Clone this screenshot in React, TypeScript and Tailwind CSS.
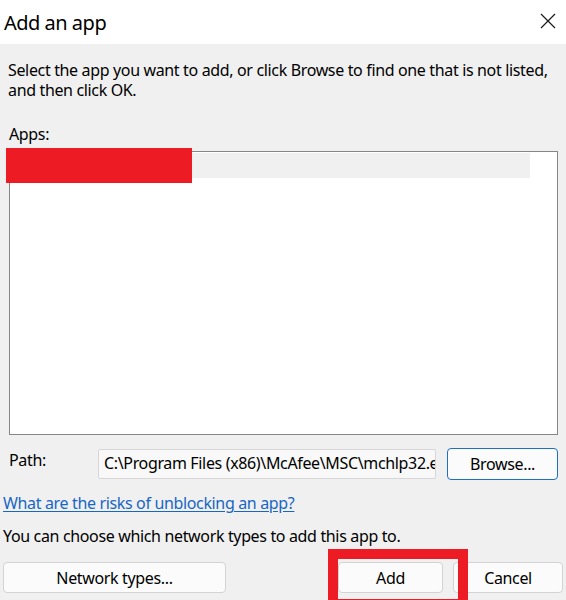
const font = { fontFamily: '"Noto Sans", "Open Sans", sans-serif' };

const CloseIcon = () => (
  <svg width="16" height="16" viewBox="0 0 16 16" fill="none">
    <path d="M1 1L15 15M15 1L1 15" stroke="#1a1a1a" strokeWidth="1.2" />
  </svg>
);

const Button = ({ label, className = "" }: { label: string; className?: string }) => (
  <button
    className={
      "h-[31px] rounded-[4px] border border-[#d3d3d3] bg-[#fbfbfb] text-[16px] tracking-[-0.35px] text-black " +
      className
    }
  >
    {label}
  </button>
);

export default function App() {
  return (
    <div className="w-[566px] h-[600px] overflow-hidden flex flex-col bg-[#f0f0f0] text-black" style={font}>
      {/* title bar */}
      <div className="h-[44px] bg-white flex items-center justify-between pl-[4px] pr-[10px]">
        <span className="text-[20px] tracking-[-0.5px] leading-none pt-[1px]">Add an app</span>
        <div className="mb-[2px]">
          <CloseIcon />
        </div>
      </div>

      <div className="flex flex-col px-[8px]">
        <p className="mt-[16px] text-[16px] leading-[20px] tracking-[-0.35px]">
          Select the app you want to add, or click Browse to find one that is not listed,
          <br />
          and then click OK.
        </p>

        <p className="mt-[25px] ml-[1px] text-[16px] leading-[19px] tracking-[-0.35px]">Apps:</p>

        {/* apps list */}
        <div className="relative ml-[1px] mt-[7px] h-[284px] w-[549px] border border-[#868686] bg-white">
          <div className="mt-[1px] h-[25px] w-[520px] bg-[#f0f0f0]" />
          <div className="absolute left-[-4px] top-[-4px] h-[35px] w-[186px] bg-[#ed1c24]" />
        </div>

        {/* path row */}
        <div className="mt-[13px] flex items-center">
          <span className="w-[90px] pl-[1px] pb-[8px] text-[16px] tracking-[-0.35px]">Path:</span>
          <div className="h-[30px] w-[338px] overflow-hidden whitespace-nowrap rounded-[2px] border border-[#d6d6d6] bg-[#f8f8f8] pl-[5px] text-[16px] leading-[27px] tracking-[-0.35px]">
            C:\Program Files (x86)\McAfee\MSC\mchlp32.exe
          </div>
          <button className="ml-[11px] h-[32px] w-[111px] rounded-[4px] border border-[#1f6fc5] bg-[#fbfbfb] text-[16px] tracking-[-0.35px]">
            Browse...
          </button>
        </div>
      </div>

      <a
        href="#"
        className="ml-[3px] mt-[14px] text-[16px] leading-[19px] tracking-[-0.35px] text-[#1866c4] underline underline-offset-2"
      >
        What are the risks of unblocking an app?
      </a>

      <p className="ml-[3px] mt-[14px] text-[16px] leading-[19px] tracking-[-0.35px]">
        You can choose which network types to add this app to.
      </p>

      {/* buttons */}
      <div className="mt-[16px] flex items-center">
        <Button label="Network types..." className="ml-[3px] w-[223px]" />
        <div className="relative ml-[112px]">
          <Button label="Add" className="w-[105px]" />
          <div className="absolute left-[-10px] top-[-13px] h-[60px] w-[140px] border-[10px] border-[#ed1c24]" />
        </div>
        <Button label="Cancel" className="ml-[10px] w-[110px]" />
      </div>
    </div>
  );
}
